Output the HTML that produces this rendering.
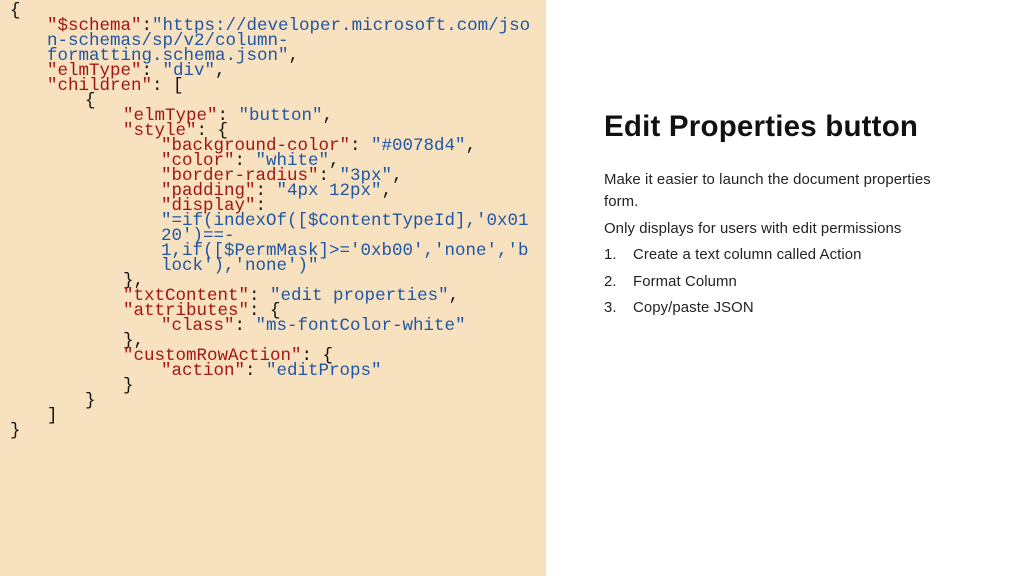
<!DOCTYPE html>
<html><head><meta charset="utf-8"><style>
body{margin:0;width:1024px;height:576px;overflow:hidden;background:#fff;position:relative;font-family:"Liberation Sans",sans-serif}
#code{position:absolute;left:0;top:0;width:546px;height:576px;background:#f8e1bf}
.l{position:absolute;white-space:pre;font-family:"Liberation Mono",monospace;font-size:17.5px;line-height:15px;color:#111;letter-spacing:0}
.k{color:#a31515}.s{color:#1f56a6}
#r{position:absolute;left:604px;top:2px;color:#111}
h1{position:absolute;left:0;top:108px;margin:0;font-size:29.5px;font-weight:bold;white-space:nowrap;letter-spacing:0.2px}
.p{position:absolute;left:0;font-size:14.9px;white-space:nowrap;color:#222;letter-spacing:0.1px}
</style></head><body>
<div id="code">
<div class="l" style="left:10px;top:4px">{</div>
<div class="l" style="left:47px;top:19px"><span class="k">"$schema"</span>:<span class="s">"https://developer.microsoft.com/jso</span></div>
<div class="l s" style="left:47px;top:34px">n-schemas/sp/v2/column-</div>
<div class="l" style="left:47px;top:49px"><span class="s">formatting.schema.json"</span>,</div>
<div class="l" style="left:47px;top:64px"><span class="k">"elmType"</span>: <span class="s">"div"</span>,</div>
<div class="l" style="left:47px;top:79px"><span class="k">"children"</span>: [</div>
<div class="l" style="left:85px;top:94px">{</div>
<div class="l" style="left:123px;top:109px"><span class="k">"elmType"</span>: <span class="s">"button"</span>,</div>
<div class="l" style="left:123px;top:124px"><span class="k">"style"</span>: {</div>
<div class="l" style="left:161px;top:139px"><span class="k">"background-color"</span>: <span class="s">"#0078d4"</span>,</div>
<div class="l" style="left:161px;top:154px"><span class="k">"color"</span>: <span class="s">"white"</span>,</div>
<div class="l" style="left:161px;top:169px"><span class="k">"border-radius"</span>: <span class="s">"3px"</span>,</div>
<div class="l" style="left:161px;top:184px"><span class="k">"padding"</span>: <span class="s">"4px 12px"</span>,</div>
<div class="l" style="left:161px;top:199px"><span class="k">"display"</span>:</div>
<div class="l s" style="left:161px;top:214px">"=if(indexOf([$ContentTypeId],'0x01</div>
<div class="l s" style="left:161px;top:229px">20')==-</div>
<div class="l s" style="left:161px;top:244px">1,if([$PermMask]&gt;='0xb00','none','b</div>
<div class="l s" style="left:161px;top:259px">lock'),'none')"</div>
<div class="l" style="left:123px;top:274px">},</div>
<div class="l" style="left:123px;top:289px"><span class="k">"txtContent"</span>: <span class="s">"edit properties"</span>,</div>
<div class="l" style="left:123px;top:304px"><span class="k">"attributes"</span>: {</div>
<div class="l" style="left:161px;top:319px"><span class="k">"class"</span>: <span class="s">"ms-fontColor-white"</span></div>
<div class="l" style="left:123px;top:334px">},</div>
<div class="l" style="left:123px;top:349px"><span class="k">"customRowAction"</span>: {</div>
<div class="l" style="left:161px;top:364px"><span class="k">"action"</span>: <span class="s">"editProps"</span></div>
<div class="l" style="left:123px;top:379px">}</div>
<div class="l" style="left:85px;top:394px">}</div>
<div class="l" style="left:47px;top:409px">]</div>
<div class="l" style="left:10px;top:424px">}</div>
</div>
<div id="r">
<h1>Edit Properties button</h1>
<div class="p" style="top:170px">Make it easier to launch the document properties</div>
<div class="p" style="top:192px">form.</div>
<div class="p" style="top:219px">Only displays for users with edit permissions</div>
<div class="p" style="top:245px">1.</div><div class="p" style="top:245px;left:29px">Create a text column called Action</div>
<div class="p" style="top:272px">2.</div><div class="p" style="top:272px;left:29px">Format Column</div>
<div class="p" style="top:298px">3.</div><div class="p" style="top:298px;left:29px">Copy/paste JSON</div>
</div>
</body></html>
